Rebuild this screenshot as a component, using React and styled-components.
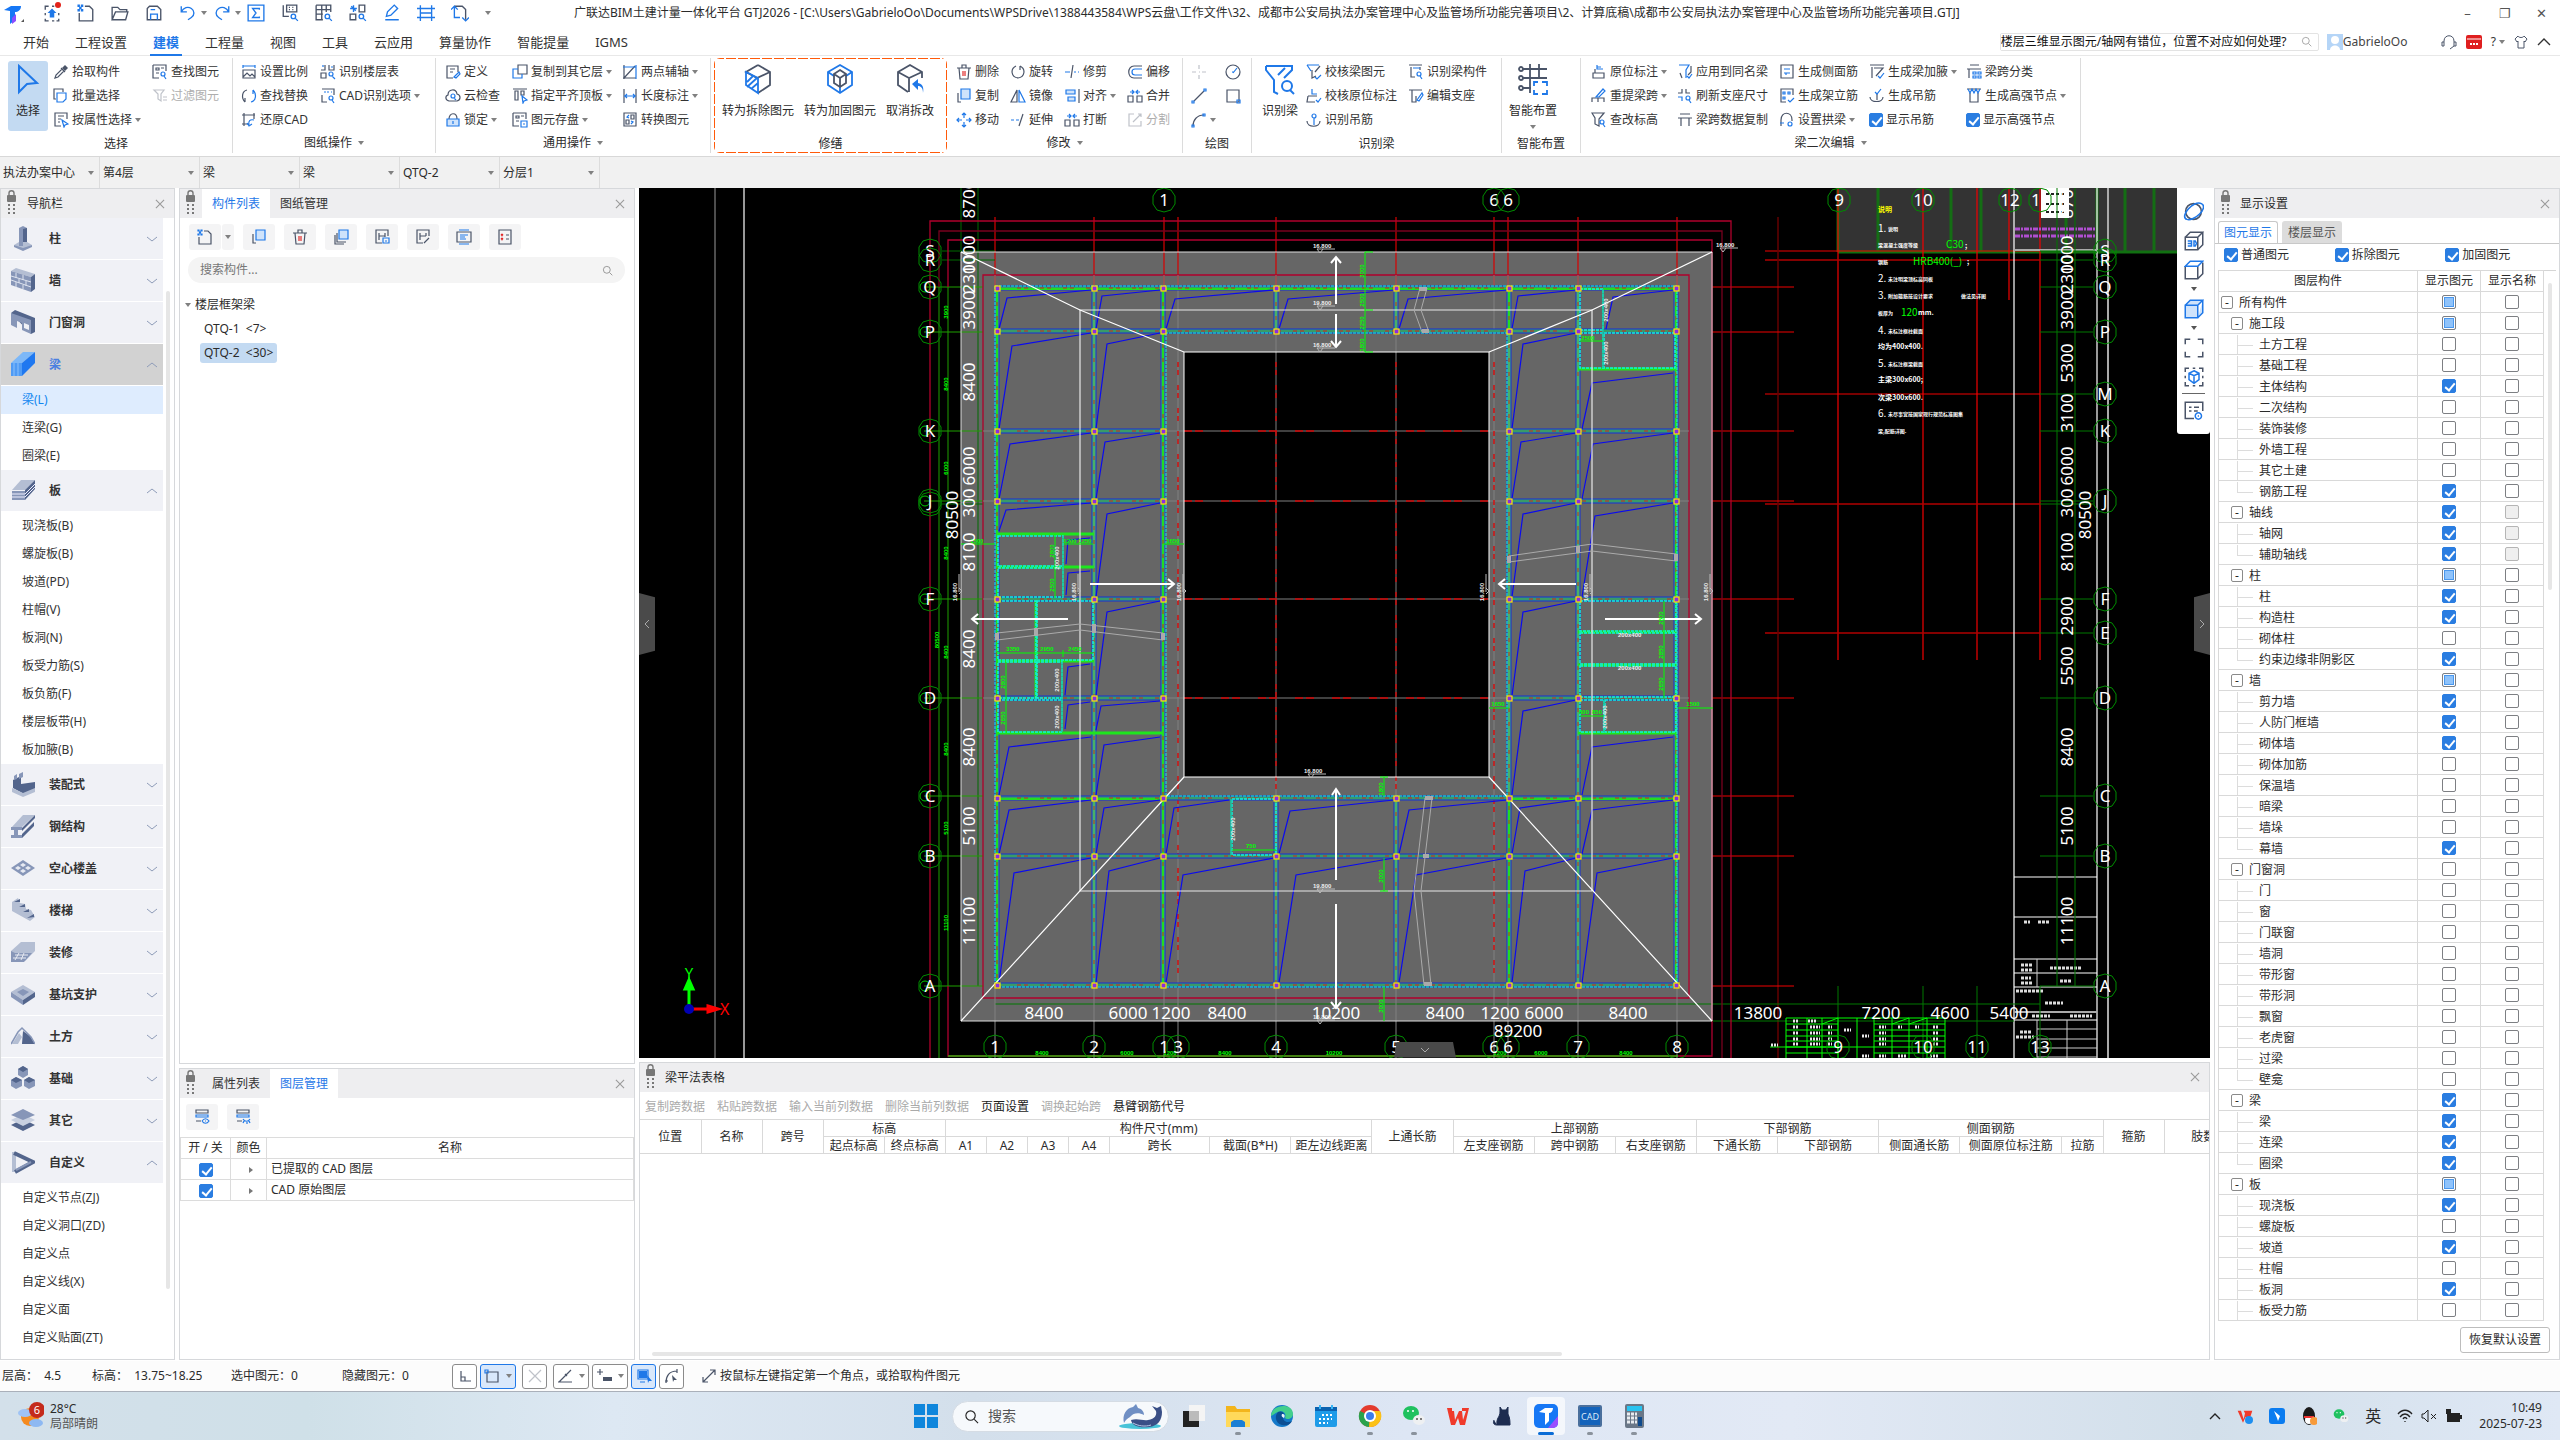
import { useState } from "react";
import styled, { createGlobalStyle, css } from "styled-components";

const BLUE = "#1f78e8";
const DARK = "#4a5468";
const LINE = "#d6d8db";

const GlobalStyle = createGlobalStyle`
  * { box-sizing: border-box; }
  body {
    margin: 0;
    color: #2b2b2b;
    background: #fff;
    font-family: "Noto Sans", "Noto Sans CJK SC", sans-serif;
    font-size: 12px;
    line-height: 16px;
  }
  button, input, select {
    font: inherit;
    color: inherit;
    margin: 0;
  }
  button {
    border: 0;
    padding: 0;
    background: none;
    white-space: nowrap;
  }
  a { color: inherit; text-decoration: none; }
`;

/* ---------- icons: [dark strokes, blue strokes, blue fill, dark fill, red strokes] ---------- */

const icons = {
  upload: ["M2 5V2h3M8 2h2M2 8v2M2 13v2h3M8 15h2M14 8v2M14 13v2h-2", "", "M8 4l4 4h-2v4H6V8H4z"],
  newFile: ["M7 2h4l3 3v10H2V8", "M1 1h1v1H1zM4 1h1v1H4zM2.500 3h1v1h-1zM1 5h1v1H1zM4 5h1v1H4z"],
  open: ["M1 14V3h5l2 2h6v2M1 14l3-7h11l-2 7z", ""],
  save: ["M2 7V4l2-2h7l3 3v9H2z", "M5 14V9h6v5M5 5h4"],
  undo: ["", "M2 2v5h5M2 7c2-4 6-5 9-3s3 6 0 8l-3 2"],
  redo: ["", "M14 2v5H9M14 7c-2-4-6-5-9-3s-3 6 0 8l3 2"],
  sigma: ["", "M1 1h14v14H1zM11 5V4H5l3 4-3 4h6v-1"],
  calcFind: ["M2 1v10h5M5 1h9v6H5zM7 3h1M10 3h1M7 5h1M10 5h1", "M9 11a2 2 0 104 0 2 2 0 10-4 0M13 13l2 2"],
  gridFind: ["M1 1h13v6M1 1v13h6M1 5h13M1 9h6M6 1v13M10 1v6", "M9 11a2 2 0 104 0 2 2 0 10-4 0M13 13l2 2"],
  partFind: ["M9 1h5v6H9zM1 9h5v5H1z", "M1 4h6M4 1v6M2 2l4 4M9 11a2 2 0 104 0 2 2 0 10-4 0M13 13l2 2"],
  pen: ["", "M3 11l1-4 6-6 3 3-6 6zM2 14h12"],
  ladder: ["", "M3 1v14M13 1v14M0 4h16M0 12h16M3 8h10"],
  pageFind: ["M3 2h7l3 3v9", "M3 2v10h5M0 5l3-3 3 3M10 12l3 3 3-3"],
  dropper: ["M2 14l1-3 6-6 2 2-6 6zM8 4l4 4", "", "", "M9 4l3-3 3 3-3 3z"],
  batch: ["M3 11H1V1h9v3", "M4 5h9v6l-3 3H4z"],
  props: ["M8 14H2V1h12v6M5 4h6M5 7h3M5 10h2", "M9 8l6 4-3 1-1 2z"],
  find: ["M1 1h13v6M1 1v13h6M4 4h3v2H4zM4 9h3M9 4h3", "M9 10a2 2 0 104 0 2 2 0 10-4 0M12 12l2 3"],
  filter: ["M2 2h10L9 6v7l-3-2V6zM11 9h4M11 12h4", ""],
  ratio: ["M2 6h12v8H2zM2 13l4-4 3 3 2-2 3 3", "M2 1v3M14 1v3M2 2h12"],
  floorTable: ["M5 1v5H1M9 1v5h5V1M1 9h5v5H1z", "M3 1v2M11 3h2M9 10a2 2 0 104 0 2 2 0 10-4 0M12 12l3 3"],
  replace: ["M6 2c-5 1-6 8-2 12M4 14v-4", "M10 14c5-1 6-8 2-12M12 2v4"],
  cadOpt: ["M2 1h12v6M2 7v7h5", "M4 4h2M7 4h2M11 4h1M9 10a2 2 0 104 0 2 2 0 10-4 0M12 12l2 3"],
  restore: ["M3 1v13M1 3h13M13 1v6M1 12h7", "M13 8c-4-1-6 1-5 5M6 11l2 3 3-2"],
  define: ["M13 8V2H2v12h6M5 5h5M5 8h3", "M9 13l5-5 1 2-4 4z"],
  cloud: ["M4 13c-4-1-4-5-1-6 0-6 8-7 9-1 4 1 4 6 0 7z", "M6 8a2 2 0 104 0 2 2 0 10-4 0M9 10l2 2"],
  lock: ["M4 7c0-7 8-7 8 0", "M2 7h12v7H2zM8 9v3"],
  copyFloor: ["M6 1h9v9H6z", "M6 5H1v9h9v-4"],
  align: ["M1 1h14M3 3h3v9H3zM9 3h3v4H9z", "M10 8l5 4-3 1-1 2z"],
  store: ["M1 1h13v6M1 1v13h6M4 4h3v2H4zM4 9h3M9 4h3", "M9 9h6v6H9zM11 12h2"],
  axis: ["M2 14L13 2M2 1v14M1 14h13", "M1 3h13M14 1v14"],
  dim: ["M2 1v14M14 1v14", "M2 8h12M5 6L3 8l2 2M11 6l2 2-2 2"],
  swap: ["M2 1h12v13H2zM4 8h3v4H4zM9 3h3v4H9z", "M7 3L5 5l2 1M9 12l2-2-2-1"],
  trash: ["M1 4h14M3 4l1 11h8l1-11M6 4V1h4v3", "", "", "", "M7 7v5M9 7v5"],
  rotate: ["M6 2c-6 3-5 11 2 12 7-1 8-9 2-12M10 2v4", ""],
  trim: ["M9 1L7 14", "M1 8h5M10 8h2M14 8h1"],
  offset: ["M15 2H7C0 2 0 14 7 14h8", "M15 5H8c-4 0-4 6 0 6h7"],
  copy: ["M5 14H2V5", "M5 1h9v10H5z"],
  mirror: ["M7 2v12H1z", "M9 2v12h6z"],
  alignTo: ["M15 1v14", "M2 2h9v4H2zM4 9h7v4H4z"],
  merge: ["M1 8h5v6H1zM10 8h5v6h-5z", "M3 4h4M13 4H9M5 2l2 2-2 2M11 2L9 4l2 2"],
  move: ["", "M8 1v5M8 10v5M1 8h5M10 8h5M6 3l2-2 2 2M6 13l2 2 2-2M3 6L1 8l2 2M13 6l2 2-2 2"],
  extend: ["M13 2L9 14", "M1 8h3M6 8h3"],
  split: ["M7 2H2v12h12V9M6 10l8-8M11 2h3v3", ""],
  point: ["M8 1v4M8 11v4M1 8h4M11 8h4M8 8h1", ""],
  circle: ["M1 8a7 7 0 1014 0A7 7 0 101 8", "M8 9l4-5M7 8h2"],
  line: ["M3 13L13 3", "M1 13h2v2H1zM13 1h2v2h-2z"],
  rect: ["M2 2h12v12H2z", "M12 12h3v3h-3z"],
  arc: ["M2 14C2 8 6 3 13 3", "M1 13h2v2H1zM12 2h2v2h-2z"],
  checkBeam: ["M9 8l5-6M6 6v8l4-2", "M1 1h12M1 1l4 6M9 13l2 2 4-4"],
  checkPos: ["M2 8h9M2 8l-1 6h8", "M6 1v5h5M10 12l2 2 3-4"],
  hook: ["M1 9c0 7 13 7 13 0", "M8 2a2 2 0 100 4 2 2 0 100-4M8 6v7"],
  beamPart: ["M1 1h13M3 3v10h4M12 3v3", "M5 4h7M9 10a2 2 0 104 0 2 2 0 10-4 0M12 12l2 3"],
  support: ["M1 2h13M4 2v12h4V8", "M9 12l5-7 1 2-4 6z"],
  posMark: ["M2 9h11v5H2zM4 9V5", "M6 1v4h6M6 3h4"],
  respan: ["M1 14v-4h12v4M7 10v4", "M5 9l7-8 2 2-6 6z"],
  elev: ["M1 1h12L8 7v7L4 12V6z", "M9 10a2 2 0 104 0 2 2 0 10-4 0M12 12l2 3"],
  same: ["M14 2v6l-3 3M5 14l-2-5", "M2 1h10L9 6v8M10 12l2 2 3-4"],
  refresh: ["M1 5h4V1M9 1v4h4", "M9 10a2 2 0 104 0 2 2 0 10-4 0M12 12l2 3M1 9h4v4"],
  spanCopy: ["M3 2h10M1 6h14M4 6v8M12 6v8", ""],
  side: ["M2 1h12v13H2z", "M5 5h6M5 9h6M7 9v2"],
  stirrup: ["M14 7V1H2v13h5", "M4 4h2v2H4zM9 4h2v2H9zM4 9h2v2H4zM9 12l2 2 4-4"],
  arch: ["M2 14V8C2-1 13-1 13 8v1", "M9 12a2 2 0 104 0 2 2 0 10-4 0M1 11h4"],
  haunch: ["M1 1h14M3 3v11M5 4h9l-7 8", "M9 12l2 2 4-5"],
  hook2: ["M1 9c0 6 13 6 13 0M8 6v6", "M6 4l2 2 4-5"],
  spans: ["M4 1h9M1 5h14M3 5v9", "M7 8h3v2H7zM12 8h3v2h-3zM7 12h3v2H7zM12 12h3v2h-3z"],
  node: ["M1 1h14M4 5v9h8V5", "M2 1l2 4 2-4 2 4 2-4 2 4 2-4"],
  layers: ["M2 6v9h9M4 4v9h9", "M6 1h9v9H6z"],
  tableSave: ["M14 7V1H2v13h6M5 4v7M5 7h6M11 4v4", "M9 9h6v5H9zM11 12h2"],
  tableEdit: ["M14 7V1H2v13h6M5 4v7M5 7h6M11 4v3M9 14l5-5", ""],
  lines: ["M1 3h14v10H1z", "M3 1h10M3 15h10M4 6h8M4 8h5M4 10h6"],
  redList: ["M2 1h12v14H2zM9 6h3M9 10h3", "", "", "", "M4 5l2 2M6 5L4 7M4 9l2 2M6 9l-2 2"],
  eye: ["M2 1h12v3H2zM2 12h5", "M2 6h12v2H2zM8 12c2-3 5-3 7 0-2 3-5 3-7 0M11 12h1"],
  eyeOff: ["M2 1h12v3H2zM2 12h5", "M2 6h12v2H2zM8 10c2 3 5 3 7 0M9 12l-1 2M12 13v2M14 12l1 2"],
  corner: ["M4 3v10h10M4 9h4v4", ""],
  snapRect: ["M3 4h11v10H3z", "M1 2h3v3H1z"],
  cross: ["M2 2l12 12M14 2L2 14", ""],
  angle: ["M1 14h14M2 14L14 2M8 6l2 2", ""],
  plusBox: ["M4 1v6M1 4h6", "", "", "M7 9h9v4H7z"],
  window: ["", "M2 2h10v9H2zM4 14h5", "M3 3h8v7H3zM11 7l5 6-3 0-1 2z"],
  curve: ["M2 15C2 8 5 3 13 3M13 1v4M1 13h3", "", "", "M8 7l5 5-3 0-1 2z"],
  orbit: ["M2 8a6 6 0 1012 0A6 6 0 102 8", "M3 14C-3 12 8-1 14 2S8 16 3 14"],
  cube3d: ["M1 5h10v10H1zM1 5l4-4h10l-4 4M15 1v10l-4 4", "M3 8h3v4H3M3 10h3M8 8h1l1 2-1 2H8z"],
  cube: ["M1 5v10h10V5M15 2v9l-4 4", "M1 5h10l4-4H5z"],
  cubeFill: ["", "M1 5h10v10H1zM1 5l4-4h10l-4 4M15 1v10l-4 4"],
  frame: ["M1 5V1h4M11 1h4v4M15 11v4h-4M5 15H1v-4", ""],
  cubeBox: ["M1 4V1h3M7 1h2M12 1h3v3M15 7v2M15 12v3h-3M9 15H7M4 15H1v-3M1 9V7", "M8 3l4 2v5l-4 3-4-3V5zM4 5l4 2 4-2M8 7v6"],
  listEye: ["M15 8V1H1v13h7M4 5h2M8 5h4M4 8h2M8 8h3", "M9 12a2.500 2.500 0 105 0 2.500 2.500 0 10-5 0M11 12h1"],
  search: ["M2 7a5 5 0 1010 0A5 5 0 102 7M11 11l4 4", ""],
  diag: ["M2 14L14 2M9 2h5v5M2 9v5h5", ""],
};

const tinted = ["copy", "layers", "lock", "alignTo", "cubeFill"];

const Svg = styled.svg`
  flex: none;
  display: block;
  opacity: ${(p) => (p.$off ? 0.35 : 1)};
`;

const Icon = ({ name, size = 16, off, color = DARK }) => {
  const [d, b, bf, df, r] = icons[name];
  return (
    <Svg width={size} height={size} viewBox="0 0 16 16" fill="none" strokeWidth="1.200" $off={off} aria-hidden="true">
      {bf && <path d={bf} fill={BLUE} />}
      {df && <path d={df} fill={color} />}
      {d && <path d={d} stroke={color} />}
      {b && <path d={b} stroke={BLUE} fill={tinted.includes(name) ? "#cfe3fb" : "none"} />}
      {r && <path d={r} stroke="#e02b2b" />}
    </Svg>
  );
};

const Caret = styled.i`
  flex: none;
  border: 3px solid transparent;
  border-top: 4px solid #808080;
  border-bottom: 0;
`;

const Check = styled.input.attrs({ type: "checkbox" })`
  appearance: none;
  flex: none;
  display: inline-block;
  position: relative;
  width: 14px;
  height: 14px;
  border: 1px solid #7d7f83;
  border-radius: 2px;
  background: ${(p) => (p.disabled ? "#efefef" : "#fff")};
  vertical-align: middle;
  ${(p) => p.disabled && "border-color: #b5b5b5;"}
  ${(p) => p.$partial && css`
    background: #8fc3fb;
    box-shadow: inset 0 0 0 1px #fff, inset 0 0 0 2px #4a98ee;
  `}
  &:checked {
    background: #2a7de1;
    border-color: #2a7de1;
  }
  &:checked::after {
    content: "";
    position: absolute;
    left: 4px;
    top: 1px;
    width: 4px;
    height: 8px;
    border: solid #fff;
    border-width: 0 2px 2px 0;
    transform: rotate(40deg);
  }
`;

/* ---------- title bar ---------- */

const Page = styled.div`
  display: flex;
  flex-direction: column;
  min-height: 100vh;
`;

const TitleBar = styled.header`
  display: flex;
  align-items: center;
  height: 28px;
  padding: 0 10px 2px 3px;
`;

const QuickBar = styled.div`
  display: flex;
  flex: 0 0 571px;
  align-items: center;
`;

const QuickButton = styled.button`
  display: flex;
  align-items: center;
  position: relative;
  gap: 4px;
  width: ${(p) => p.$w || 34}px;
  height: 22px;
`;

const RedDot = styled.i`
  position: absolute;
  left: 12px;
  top: 0;
  width: 6px;
  height: 6px;
  border-radius: 50%;
  background: #e2231a;
`;

const TitleText = styled.div`
  flex: 1;
  white-space: nowrap;
`;

const WinButtons = styled.div`
  display: flex;
  gap: 20px;
  button { width: 17px; color: #555; font-size: 13px; }
`;

const TabRow = styled.nav`
  display: flex;
  align-items: center;
  height: 28px;
  padding: 0 9px 0 10px;
  border-bottom: 1px solid #e8e8e8;
`;

const RibbonTab = styled.a`
  position: relative;
  padding: 0 13px;
  font-size: 13px;
  line-height: 28px;
  color: ${(p) => (p.$on ? BLUE : "#333")};
  font-weight: ${(p) => (p.$on ? 700 : 400)};
  &::after {
    content: "";
    display: ${(p) => (p.$on ? "block" : "none")};
    position: absolute;
    left: 10px;
    right: 10px;
    bottom: 0;
    height: 2px;
    background: ${BLUE};
  }
`;

const HelpSearch = styled.label`
  display: flex;
  align-items: center;
  width: 319px;
  height: 18px;
  margin-left: auto;
  padding-right: 6px;
  border: 1px solid #e3e3e3;
  border-radius: 2px;
  input {
    flex: 1;
    min-width: 0;
    height: 16px;
    padding: 0 12px 0 0;
    border: 0;
    outline: 0;
    color: #111;
  }
`;

const Account = styled.div`
  display: flex;
  align-items: center;
  width: 114px;
  margin-left: 8px;
  color: #444;
`;

const HelpIcons = styled.div`
  display: flex;
  align-items: center;
  gap: 9px;
`;

/* ---------- ribbon ---------- */

const Ribbon = styled.section`
  display: flex;
  height: 101px;
  padding: 2px 0 3px;
  border-bottom: 1px solid #d8d8d8;
`;

const Group = styled.div`
  display: flex;
  flex-direction: column;
  width: ${(p) => p.$w}px;
  padding-top: 2px;
  border-right: 1px solid #dcdcdc;
  ${(p) => p.$marked && css`
    margin-left: 3px;
    border: 0;
    border-radius: 6px;
    background:
      repeating-linear-gradient(90deg, #ff5a0a 0 10px, transparent 10px 12px) 0 0 / 100% 1px no-repeat,
      repeating-linear-gradient(90deg, #ff5a0a 0 10px, transparent 10px 12px) 0 100% / 100% 1px no-repeat,
      repeating-linear-gradient(#ff5a0a 0 10px, transparent 10px 12px) 0 0 / 1px 100% no-repeat,
      repeating-linear-gradient(#ff5a0a 0 10px, transparent 10px 12px) 100% 0 / 1px 100% no-repeat;
  `}
`;

const GroupBody = styled.div`
  display: flex;
  height: 72px;
  padding-left: ${(p) => p.$pad || 8}px;
`;

const GroupLabel = styled.div`
  display: flex;
  align-items: center;
  justify-content: center;
  gap: 6px;
  padding-top: ${(p) => (p.$drop ? 3 : 4)}px;
`;

const Column = styled.div`
  display: flex;
  flex-direction: column;
  width: ${(p) => p.$w}px;
`;

const Tool = styled.button`
  display: flex;
  align-items: center;
  height: 24px;
  gap: 3px;
  color: ${(p) => (p.disabled ? "#aeaeae" : "#333")};
`;

const ToolCheck = styled.label`
  display: flex;
  align-items: center;
  height: 24px;
  gap: 3px;
`;

const BigTool = styled.button`
  display: flex;
  flex-direction: column;
  align-items: center;
  width: ${(p) => p.$w}px;
  height: 70px;
  margin: 1px 5px 0 0;
  padding-top: 2px;
  gap: 6px;
  border-radius: 3px;
  background: ${(p) => (p.$on ? "#c3daf2" : "none")};
`;

const ribbonTabs = ["开始", "工程设置", "建模", "工程量", "视图", "工具", "云应用", "算量协作", "智能提量", "IGMS"];

const bigIcons = {
  cursor: <path d="M7 3l18 17-10 1-8 8z" fill="none" stroke={BLUE} strokeWidth="2" />,
  remove: (
    <g fill="none" strokeWidth="1.800">
      <path d="M16 2l12 7v13l-12 8M16 2L4 9l11 6 13-6" stroke={DARK} />
      <path d="M4 9v13l12 8V15zM5 19l6-6M5 24L15 15M9 26l7-6" stroke={BLUE} />
    </g>
  ),
  strengthen: (
    <g fill="none" strokeWidth="1.800">
      <path d="M16 2l12 7v13l-12 8-12-8V9z" stroke={BLUE} />
      <path d="M4 9l6 4M28 9l-6 4M16 30v-6" stroke={BLUE} />
      <path d="M16 7l6 4v9l-6 4-6-4v-9zM10 11l6 4 6-4M16 15v9" stroke={DARK} />
    </g>
  ),
  cancel: (
    <g fill="none" strokeWidth="1.800">
      <path d="M28 15V9L16 2 4 9v13l10 7M4 9l11 6 13-6M15 15v14" stroke={DARK} />
      <path d="M29 30c0-5-2-7-5-7v4l-6-6 6-5v4c5 1 6 5 5 10z" fill={BLUE} />
    </g>
  ),
  beam: (
    <g fill="none" stroke={BLUE} strokeWidth="2">
      <path d="M2 3h26v4l-8 8M2 3v4l8 10v12l4 2M14 12l7-7" />
      <circle cx="23" cy="23" r="5" /><path d="M26 27l4 4" />
    </g>
  ),
  layout: (
    <g fill="none" strokeWidth="1.800">
      <path d="M6 6h24M6 15h24M6 25h8M13 1v29M22 1v15" stroke={DARK} />
      <circle cx="4" cy="6" r="2" stroke={DARK} /><circle cx="4" cy="15" r="2" stroke={DARK} /><circle cx="4" cy="25" r="2" stroke={DARK} />
      <path d="M17 23v-4h4M25 19h5v4M30 27v4h-5M21 31h-4v-4" stroke={BLUE} />
    </g>
  ),
};

const Big = ({ icon, text, w, on, drop }) => (
  <BigTool $w={w} $on={on}>
    <Svg width="32" height="34" viewBox="0 0 32 34" aria-hidden="true">{bigIcons[icon]}</Svg>
    {text}
    {drop && <Caret />}
  </BigTool>
);

// item: [icon, text, flags]  flags: v = drop-down, x = disabled, c = tick box
const Tools = ({ w, items }) => (
  <Column $w={w}>
    {items.map(([icon, text, flags = ""], i) =>
      flags.includes("c") ? (
        <ToolCheck key={i}><Check defaultChecked />{text}</ToolCheck>
      ) : (
        <Tool key={i} disabled={flags.includes("x")} aria-label={text || icon}>
          <Icon name={icon} off={flags.includes("x")} />
          {text}
          {flags.includes("v") && <Caret />}
        </Tool>
      )
    )}
  </Column>
);

const ribbonGroups = [
  {
    label: "选择", w: 233, big: [["cursor", "选择", 40, true]],
    cols: [
      [99, [["dropper", "拾取构件"], ["batch", "批量选择"], ["props", "按属性选择", "v"]]],
      [76, [["find", "查找图元"], ["filter", "过滤图元", "x"]]],
    ],
  },
  {
    label: "图纸操作", w: 203, drop: true, pad: 8,
    cols: [
      [79, [["ratio", "设置比例"], ["replace", "查找替换"], ["restore", "还原CAD"]]],
      [110, [["floorTable", "识别楼层表"], ["cadOpt", "CAD识别选项", "v"]]],
    ],
  },
  {
    label: "通用操作", w: 275, drop: true, pad: 9,
    cols: [
      [67, [["define", "定义"], ["cloud", "云检查"], ["lock", "锁定", "v"]]],
      [110, [["copyFloor", "复制到其它层", "v"], ["align", "指定平齐顶板", "v"], ["store", "图元存盘", "v"]]],
      [86, [["axis", "两点辅轴", "v"], ["dim", "长度标注", "v"], ["swap", "转换图元"]]],
    ],
  },
  {
    label: "修缮", w: 233, marked: true, pad: 5,
    big: [["remove", "转为拆除图元", 78], ["strengthen", "转为加固图元", 76], ["cancel", "取消拆改", 54]],
  },
  {
    label: "修改", w: 236, drop: true, pad: 9,
    cols: [
      [54, [["trash", "删除"], ["copy", "复制"], ["move", "移动"]]],
      [54, [["rotate", "旋转"], ["mirror", "镜像"], ["extend", "延伸"]]],
      [63, [["trim", "修剪"], ["alignTo", "对齐", "v"], ["merge", "打断"]]],
      [50, [["offset", "偏移"], ["merge", "合并"], ["split", "分割", "x"]]],
    ],
  },
  {
    label: "绘图", w: 69, pad: 8,
    cols: [
      [34, [["point", "", "x"], ["line", ""], ["arc", "", "v"]]],
      [20, [["circle", ""], ["rect", ""]]],
    ],
  },
  {
    label: "识别梁", w: 250, pad: 7, big: [["beam", "识别梁", 42]],
    cols: [
      [102, [["checkBeam", "校核梁图元"], ["checkPos", "校核原位标注"], ["hook", "识别吊筋"]]],
      [84, [["beamPart", "识别梁构件"], ["support", "编辑支座"]]],
    ],
  },
  { label: "智能布置", w: 79, pad: 5, big: [["layout", "智能布置", 52, false, true]] },
  {
    label: "梁二次编辑", w: 500, drop: true, pad: 10,
    cols: [
      [86, [["posMark", "原位标注", "v"], ["respan", "重提梁跨", "v"], ["elev", "查改标高"]]],
      [102, [["same", "应用到同名梁"], ["refresh", "刷新支座尺寸"], ["spanCopy", "梁跨数据复制"]]],
      [90, [["side", "生成侧面筋"], ["stirrup", "生成架立筋"], ["arch", "设置拱梁", "v"]]],
      [97, [["haunch", "生成梁加腋", "v"], ["hook2", "生成吊筋"], ["", "显示吊筋", "c"]]],
      [110, [["spans", "梁跨分类"], ["node", "生成高强节点", "v"], ["", "显示高强节点", "c"]]],
    ],
  },
];

const SelectBar = styled.section`
  display: flex;
  height: 31px;
  background: #f1f1f1;
`;

const SelectBox = styled.label`
  display: flex;
  align-items: center;
  width: 100px;
  padding-right: 5px;
  border-right: 1px solid #dcdcdc;
  select {
    appearance: none;
    flex: 1;
    min-width: 0;
    height: 30px;
    padding: 0 0 0 3px;
    border: 0;
    background: none;
  }
`;

/* ---------- dock panels ---------- */

const Main = styled.main`
  display: grid;
  flex: 1;
  grid-template-columns: 175px 456px minmax(0, 1fr) 346px;
  column-gap: 4px;
  min-height: 0;
  padding-bottom: 1px;
`;

const Stack = styled.div`
  display: flex;
  flex-direction: column;
  gap: 4px;
  min-width: 0;
`;

const Panel = styled.section`
  display: flex;
  flex-direction: column;
  flex: ${(p) => p.$flex || "1"};
  min-width: 0;
  overflow: hidden;
  border: 1px solid ${LINE};
  background: #fff;
`;

const PanelHead = styled.header`
  display: flex;
  flex: none;
  align-items: stretch;
  height: 29px;
  padding: 0 9px 0 6px;
  background: #eeeef0;
`;

const PanelTitle = styled.h2`
  margin: 0;
  padding-left: ${(p) => p.$pad || 10}px;
  font-size: 12px;
  font-weight: 400;
  line-height: 30px;
`;

const DockTab = styled.button`
  padding: 1px 10px 0;
  color: ${(p) => (p.$on ? BLUE : "#333")};
  background: ${(p) => (p.$on ? "#fff" : "none")};
`;

const CloseButton = styled.button`
  margin-left: auto;
  svg { display: block; }
`;

const Close = () => (
  <CloseButton aria-label="关闭">
    <svg width="10" height="10" viewBox="0 0 11 11" stroke="#9a9a9a" strokeWidth="1.200"><path d="M1 1l9 9M10 1l-9 9" /></svg>
  </CloseButton>
);

const GripSvg = styled(Svg)`
  margin-right: 7px;
`;

const Grip = () => (
  <GripSvg width="9" height="26" viewBox="0 0 9 26" aria-hidden="true">
    <rect y="6" width="9" height="7" rx="1" fill="#777" />
    <path d="M2 6V4c0-3 5-3 5 0v2" fill="none" stroke="#777" strokeWidth="1.400" />
    <path d="M2 15v10M7 15v10" stroke="#777" strokeWidth="2" strokeDasharray="2 2" />
  </GripSvg>
);

const NavBody = styled.div`
  display: flex;
  justify-content: space-between;
  padding-right: 4px;
`;

const NavList = styled.div`
  width: 162px;
`;

const ScrollThumb = styled.i`
  width: 4px;
  height: ${(p) => p.$h}px;
  margin-top: ${(p) => p.$top}px;
  border-radius: 2px;
  background: #e6e6e6;
`;

const NavGroup = styled.button`
  display: flex;
  align-items: center;
  width: 100%;
  height: 41px;
  margin-bottom: 1px;
  padding: 0 6px 0 10px;
  gap: 14px;
  font-weight: 700;
  text-align: left;
  color: ${(p) => (p.$on ? "#4a7fe0" : "#333")};
  background: ${(p) => (p.$on ? "#d2d2d2" : "#f0f1f6")};
  span { flex: 1; }
`;

const NavItem = styled.a`
  display: block;
  padding-left: 21px;
  line-height: 28px;
  color: ${(p) => (p.$on ? "#1287f0" : "#333")};
  background: ${(p) => (p.$on ? "#deecfe" : "none")};
`;

const L = "#b4bed3", M = "#8796b8", H = "#53658c";
const navArt = {
  柱: <g><path d="M8 2l4-2 4 2v17H8z" fill={M} /><path d="M12 3l4-1v17l-4 2z" fill={H} /><path d="M3 19l5-3h8l5 3-9 5z" fill={L} /><path d="M3 19l9 3 9-3v2l-9 4-9-4z" fill={M} /><path d="M8 3h4v17H8z" fill={M} /></g>,
  墙: <g><path d="M0 3l5-3 19 6-4 3z" fill={L} /><path d="M0 3l20 6v15L0 17z" fill={M} /><path d="M20 9l4-3v15l-4 3z" fill={H} /><path d="M0 8l20 6M0 12l20 7M5 5v5M12 7v5M8 11v4M15 13v5M5 14v5M12 17v4" stroke="#dfe4ef" /></g>,
  门窗洞: <g><path d="M0 3l4-3 20 8v14l-4 2z" fill={H} /><path d="M0 3l20 7v14l-9-4v-7l-5-2v7l-6-3z" fill={M} /><path d="M13 13l5 2v5l-5-2z" fill="#f0f1f6" /></g>,
  梁: <g><path d="M0 11L12 0h12L11 11z" fill="#7db8f8" /><path d="M0 11h11v13H0z" fill="#4f9bf5" /><path d="M11 11L24 0v11L11 24z" fill="#1f78f0" /><path d="M3 11v13M7 11v13" stroke="#8cc0fa" /></g>,
  板: <g><path d="M1 12L10 2h14L14 12z" fill={L} /><path d="M1 13h13v9H1z" fill={M} /><path d="M14 12L24 2v9L14 22z" fill={H} /><path d="M1 16h13L24 6M1 19h13L24 9" stroke="#eef" fill="none" /></g>,
  装配式: <g><path d="M2 8l8-4v8l14-2v7l-11 5-11-6z" fill={H} /><path d="M1 16l11 5 12-5v4l-12 5-11-5z" fill={L} /><path d="M3 4l3-2v5L3 8zM8 2l4-2v5L8 7z" fill={M} /></g>,
  钢结构: <g><path d="M0 14L12 1h12L11 13z" fill={L} /><path d="M0 13h11v3H7v5h4v3H0v-3h3v-5H0z" fill={M} /><path d="M11 14L24 1v3L11 17zM11 20l12-12v4L11 24z" fill={H} /></g>,
  空心楼盖: <g><path d="M12 4l12 8-12 8L0 12z" fill={M} /><path d="M12 7l3 2-3 2-3-2zM7 10l3 2-3 2-3-2zM17 10l3 2-3 2-3-2zM12 13l3 2-3 2-3-2z" fill="#e7eaf2" /></g>,
  楼梯: <g><path d="M1 4l6-4 2 5 5 1 1 5 5 1 4 7-5 4L1 13z" fill={L} /><path d="M3 4l6-3v3zM8 9l6-3v3zM12 14l6-3v3zM16 20l7-4v3z" fill={H} /></g>,
  装修: <g><path d="M0 11L10 2h14v9L14 21H0z" fill={L} /><path d="M0 11l4 2h17l-8 9H0z" fill={M} /><path d="M4 15h13M2 18h13M8 13l-4 7M13 13l-3 7" stroke="#e8ebf3" /></g>,
  基坑支护: <g><path d="M12 3l12 7-12 8L0 10z" fill={L} /><path d="M0 10l12 8v5L0 15z" fill={M} /><path d="M24 10l-12 8v5l12-8z" fill={H} /><path d="M12 7l6 3-6 4-6-4z" fill={M} /></g>,
  土方: <g><path d="M1 20L8 9l3 4-4 7z" fill={L} /><path d="M12 7l7 5 5 8H11z" fill={H} /><path d="M0 20L7 8l4-4 9 9 4 7" fill="none" stroke={M} strokeWidth="1.500" /></g>,
  基础: <g><path d="M7 3l5-3 5 3v6l-5 3-5-3zM0 14l5-3 6 3v6l-6 3-5-3zM13 14l5-3 6 3v6l-6 3-5-3z" fill={M} /><path d="M7 3l5 3 5-3-5-3zM0 14l5 3 6-3-6-3zM13 14l5 3 6-3-6-3z" fill={H} /></g>,
  其它: <g><path d="M12 11l12 6-12 6-12-6z" fill={H} /><path d="M12 6l12 6-12 6-12-6z" fill="#c8d0e0" /><path d="M12 1l12 6-12 5L0 7z" fill={M} /></g>,
  自定义: <g fill="none" strokeWidth="4"><path d="M3 2v20" stroke={L} /><path d="M3 3l19 9L4 22" stroke={H} /><path d="M5 20l15-8" stroke={M} strokeWidth="2" /></g>,
};

const navGroups = [
  ["柱"], ["墙"], ["门窗洞"],
  ["梁", ["梁(L)", "连梁(G)", "圈梁(E)"]],
  ["板", ["现浇板(B)", "螺旋板(B)", "坡道(PD)", "柱帽(V)", "板洞(N)", "板受力筋(S)", "板负筋(F)", "楼层板带(H)", "板加腋(B)"]],
  ["装配式"], ["钢结构"], ["空心楼盖"], ["楼梯"], ["装修"], ["基坑支护"], ["土方"], ["基础"], ["其它"],
  ["自定义", ["自定义节点(ZJ)", "自定义洞口(ZD)", "自定义点", "自定义线(X)", "自定义面", "自定义贴面(ZT)"]],
];

const NavPanel = () => {
  const [current, setCurrent] = useState("梁(L)");
  return (
    <Panel>
      <PanelHead><Grip /><PanelTitle $pad={4}>导航栏</PanelTitle><Close /></PanelHead>
      <NavBody>
        <NavList>
          {navGroups.map(([name, items]) => (
            <div key={name}>
              <NavGroup $on={name === "梁"}>
                <Svg width="24" height="25" viewBox="0 0 24 25" aria-hidden="true">{navArt[name]}</Svg>
                <span>{name}</span>
                <svg width="10" height="6" viewBox="0 0 10 6" fill="none" stroke="#8e9cb8">
                  <path d={items ? "M0 5l5-4 5 4" : "M0 1l5 4 5-4"} />
                </svg>
              </NavGroup>
              {items && items.map((t) => (
                <NavItem key={t} href="#" $on={t === current} onClick={() => setCurrent(t)}>{t}</NavItem>
              ))}
            </div>
          ))}
        </NavList>
        <ScrollThumb $h={998} $top={73} />
      </NavBody>
    </Panel>
  );
};

const ToolRow = styled.div`
  display: flex;
  gap: 9px;
  padding: ${(p) => p.$pad || "6px 9px 7px"};
`;

const IconButton = styled.button`
  display: flex;
  align-items: center;
  justify-content: center;
  width: ${(p) => p.$w || 32}px;
  height: 26px;
  border-radius: 3px;
  background: #f4f4f5;
`;

const Joined = styled.div`
  display: flex;
  gap: 1px;
`;

const SearchField = styled.label`
  display: flex;
  align-items: center;
  height: 26px;
  margin: 0 9px 0 8px;
  padding: 0 12px;
  border-radius: 13px;
  background: #f4f4f4;
  input {
    flex: 1;
    padding: 0;
    border: 0;
    outline: 0;
    background: none;
  }
  input::placeholder { color: #777; }
`;

const Tree = styled.ul`
  margin: 10px 0 0;
  padding: 0 0 0 5px;
  list-style: none;
`;

const TreeRow = styled.li`
  display: flex;
  align-items: center;
  height: 24px;
  padding-left: ${(p) => (p.$child ? 15 : 0)}px;
  gap: 4px;
`;

const TreeName = styled.span`
  padding: 2px 4px;
  border-radius: 3px;
  background: ${(p) => (p.$on ? "#c3daf2" : "none")};
`;

const LayerTable = styled.table`
  width: 100%;
  border-collapse: collapse;
  th, td {
    height: 21px;
    padding: 0;
    border: 1px solid #dcdcdc;
    font-weight: 400;
    text-align: center;
  }
  td:last-child { padding-left: 4px; text-align: left; }
  th:nth-child(1) { width: 50px; }
  th:nth-child(2) { width: 36px; }
`;

const Side = styled.i`
  display: inline-block;
  margin-left: 4px;
  border: 3px solid transparent;
  border-left: 4px solid #777;
  border-right: 0;
`;

/* ---------- drawing canvas ---------- */

const CanvasBox = styled.section`
  display: flex;
  flex: 871 1 0;
  position: relative;
  min-height: 0;
  overflow: hidden;
  background: #000;
  > svg { position: absolute; inset: 0; width: 100%; height: 100%; }
`;

const ViewTools = styled.div`
  position: absolute;
  right: 0;
  top: 0;
  display: flex;
  flex-direction: column;
  align-items: center;
  width: 33px;
  height: 246px;
  padding-top: 9px;
  border-radius: 0 0 3px 3px;
  background: #fff;
  button { height: 29px; }
  ${Caret} { margin: 3px 0; border-top-color: #555; }
  hr { width: 23px; height: 1px; margin: 2px 0; border: 0; background: #666; }
`;

const Handle = styled.button`
  position: absolute;
  color: #aaa;
  background: #4a4a4a;
  ${(p) => p.$side === "left" && "left: 0; top: 405px; width: 16px; height: 62px; clip-path: polygon(0 0, 100% 7%, 100% 93%, 0 100%);"}
  ${(p) => p.$side === "right" && "right: 0; top: 405px; width: 16px; height: 62px; clip-path: polygon(100% 0, 0 7%, 0 93%, 100% 100%);"}
  ${(p) => p.$side === "bottom" && "left: 755px; bottom: 0; width: 62px; height: 16px; clip-path: polygon(5% 0, 95% 0, 100% 100%, 0 100%);"}
  svg { display: block; margin: 0 auto; }
`;

const CX = [997, 1094, 1163, 1276, 1396, 1509, 1578, 1676];
const AX = [995, 1094, 1164, 1178, 1276, 1396, 1494, 1508, 1578, 1677];
const rowsLeft = { S: 251, R: 260, Q: 287, P: 332, K: 431, J: 501, F: 599, D: 698, C: 796, B: 856, A: 986 };
const rowsRight = { S: 251, R: 260, Q: 287, P: 332, M: 394, K: 431, J: 501, F: 599, E: 633, D: 698, C: 796, B: 856, A: 986 };

const slabs = [
  ...[[288, 331], [331, 431], [431, 501], [501, 533]].map(([a, b]) => [997, a, 1093, b]),
  [1064, 536, 1092, 566], [1064, 569, 1092, 597], [1063, 662, 1092, 697], [1063, 700, 1092, 731],
  ...[[735, 797], [798, 856], [856, 985]].map(([a, b]) => [997, a, 1093, b]),
  ...[[288, 331], [331, 431], [431, 501], [501, 599], [599, 698], [699, 732], [735, 797], [798, 856], [856, 985]].map(([a, b]) => [1094, a, 1162, b]),
  [1164, 288, 1276, 331], [1277, 288, 1396, 331], [1397, 288, 1509, 331],
  [1164, 798, 1231, 856], [1277, 798, 1396, 856], [1397, 798, 1509, 856],
  [1164, 856, 1276, 985], [1277, 856, 1396, 985], [1397, 856, 1509, 985],
  ...[[288, 331], [331, 431], [431, 501], [501, 599], [599, 698], [698, 797], [798, 856], [856, 985]].map(([a, b]) => [1510, a, 1578, b]),
  [1604, 288, 1675, 331],
  ...[[371, 431], [431, 501], [501, 599], [735, 797], [798, 856], [856, 985]].map(([a, b]) => [1580, a, 1675, b]),
];

const beamsH = [
  [288, 997, 1676], [331, 997, 1676], [798, 997, 1676], [856, 997, 1676], [985, 997, 1676],
  ...[431, 501, 599, 698].flatMap((y) => [[y, 997, 1163], [y, 1509, 1676]]),
];
const beamsV = [
  ...[997, 1094, 1163, 1509, 1578, 1676].map((x) => [x, 288, 985]),
  ...[1276, 1396].flatMap((x) => [[x, 288, 331], [x, 798, 985]]),
];
const cyanBoxes = [
  [998, 536, 65, 30], [998, 568, 65, 29], [998, 601, 38, 59], [1037, 601, 56, 59], [998, 662, 38, 36], [1037, 662, 25, 36], [998, 700, 64, 32],
  [1580, 289, 23, 41], [1580, 333, 23, 35], [1604, 333, 71, 35], [1580, 601, 96, 30], [1580, 633, 96, 31], [1580, 666, 96, 31],
  [1580, 700, 24, 32], [1605, 700, 71, 32], [1232, 799, 44, 56],
];
const greenBars = [
  [997, 534, 1094, 534], [997, 567, 1094, 567], [1036, 600, 1036, 698], [997, 661, 1094, 661], [997, 733, 1163, 733],
  [1578, 369, 1676, 369], [1578, 632, 1676, 632], [1578, 665, 1676, 665], [1578, 733, 1676, 733],
];

const bubble = (cx, cy, r = 12) =>
  Array.from({ length: 10 }, (_, i) => {
    const a = (i * Math.PI) / 5 + Math.PI / 2;
    return `${Math.round(cx + r * Math.cos(a))},${Math.round(cy + r * Math.sin(a))}`;
  }).join(" ");

const Lines = ({ list, ...rest }) => (
  <path d={list.map(([a, b, c, d]) => `M${a} ${b}L${c} ${d}`).join("")} fill="none" {...rest} />
);

const Bubble = ({ x, y, t }) => (
  <g>
    <polygon points={bubble(x, y)} fill="none" stroke="#008c00" />
    <text x={x} y={y + 6} textAnchor="middle">{t}</text>
  </g>
);

const Turned = ({ x, y, children, ...rest }) => (
  <text transform={`translate(${x} ${y}) rotate(-90)`} textAnchor="middle" {...rest}>{children}</text>
);

const notes = [
  [228, "1.", "说明"], [244, "", "梁混凝土强度等级"], [261, "", "钢筋"], [278, "2.", "未注明梁顶标高同板"], [295, "3.", "附加箍筋按设计要求"],
  [312, "", "板厚为"], [330, "4.", "未标注框柱截面"], [346, "", "均为400x400."], [363, "5.", "未标注框梁截面"], [379, "", "主梁300x600;"],
  [397, "", "次梁300x600."], [413, "6.", "未尽事宜按国家现行规范标准图集"], [430, "", "梁,配筋详图."],
];

const PlanDrawing = () => (
  <svg viewBox="639 188 1571 871" preserveAspectRatio="xMinYMin slice" fontFamily='"Noto Sans", "Noto Sans CJK SC", sans-serif' fontSize="17" fill="#fff" role="img" aria-label="第4层平面图">
    <Lines list={[[715, 188, 715, 1059]]} stroke="#999" />
    <Lines list={[[744, 188, 744, 1059]]} stroke="#fff" strokeWidth="1.200" />

    {/* title sheet and notes on the right */}
    <rect x="1838" y="188" width="339" height="64" fill="#333" />
    <Lines list={[1838, 1878, 1951, 1981, 2066, 2097, 2125, 2154].map((x) => [x, 188, x, 252])} stroke="#146e14" strokeWidth="3" />
    <Lines list={[[1838, 252, 2177, 252]]} stroke="#117011" strokeWidth="3" />
    <Lines list={[[1765, 251, 2040, 251], [1765, 394, 2040, 394], [1838, 188, 1838, 660], [1923, 188, 1923, 660], [1977, 188, 1977, 660], [2009, 188, 2009, 300], [2040, 188, 2040, 660]]} stroke="#f00000" strokeWidth="1.200" />
    <Lines list={[[1765, 260, 2040, 260], [1765, 504, 2040, 504], [1765, 633, 2040, 633]]} stroke="#b00000" strokeWidth="1.500" />
    <Lines list={[[1778, 217, 1778, 1059]]} stroke="#640000" strokeWidth="1.500" />
    <Lines list={Object.entries(rowsLeft).filter(([k]) => k !== "S" && k !== "R").map(([, y]) => [1689, y, 1794, y])} stroke="#f00000" strokeWidth="1.200" />
    <g fontSize="7" fontFamily='"Liberation Sans Narrow", "Noto Sans CJK SC", sans-serif' fontWeight="700">
      <text x="1878" y="212" fill="#ff0">说明</text>
      {notes.map(([y, n, t]) => (
        <g key={y}>
          {n && <text x="1878" y={y + 4} fontSize="10" fontWeight="400">{n}</text>}
          <text x={n ? 1888 : 1878} y={y + 3} fontSize={/\d/.test(t) ? 7 : 5}>{t}</text>
        </g>
      ))}
      <text x="1946" y="248" fill="#0f0" fontSize="10" fontWeight="400">C30</text>
      <text x="1965" y="248">;</text>
      <text x="1913" y="265" fill="#0f0" fontSize="10" fontWeight="400">HRB400(_)</text>
      <text x="1967" y="264">;</text>
      <text x="1961" y="298" fontSize="5">做法见详图</text>
      <text x="1901" y="316" fill="#0f0" fontSize="10" fontWeight="400">120</text>
      <text x="1918" y="315">mm.</text>
    </g>
    <rect x="2041" y="188" width="28" height="30" />
    <path d="M2046 194h18M2046 204h18M2046 212h18" stroke="#222" strokeWidth="2" strokeDasharray="3 2" />
    <path d="M2015 229h81M2015 236h81" stroke="#b04fd0" strokeWidth="3" strokeDasharray="5 1 2 1" />
    <Lines list={[[2014, 188, 2014, 1059], [2097, 188, 2097, 1059]]} stroke="#fff" strokeWidth="1.200" />
    <Lines list={[[2108, 188, 2108, 1059], [2014, 250, 2097, 250], [2014, 1012, 2097, 1012]]} stroke="#aaa" strokeWidth="2" />
    <Lines list={[877, 917, 959, 973, 987, 1020].map((y) => [2014, y, 2097, y])} stroke="#fff" />
    <Lines list={[[2037, 959, 2037, 987], [2037, 1020, 2037, 1059], [2067, 1020, 2067, 1059], [2037, 1029, 2097, 1029], [2037, 1039, 2097, 1039], [2037, 1048, 2097, 1048], [2037, 1057, 2097, 1057]]} stroke="#ccc" />
    <path d="M2024 922h6M2038 922h12M2021 965h12M2021 970h12M2021 978h10M2021 983h12M2050 968h32M2060 981h12M2016 991h28M2045 1003h18M2032 1016h18M2070 1016h22M2020 1032h12M2016 1037h18" stroke="#ddd" strokeWidth="3" strokeDasharray="3 1" />
    <Lines list={[[2057, 188, 2057, 986], [2075, 188, 2075, 986], ...Object.values(rowsRight).map((y) => [2040, y, 2093, y]), [2040, 504, 2093, 504]]} stroke="#007800" />

    {/* roof area */}
    <path fillRule="evenodd" d="M961 252H1712V1021H961ZM1184 352V777H1489V352Z" fill="#666" />
    <Lines list={AX.map((x) => [x, 217, x, 287])} stroke="#d80000" strokeWidth="1.200" />
    <Lines list={[[961, 188, 961, 252], [978, 188, 978, 986], [942, 251, 995, 251], [942, 260, 995, 260], [942, 504, 983, 504]]} stroke="#006a00" />
    <Lines list={[[939, 287, 939, 1059], [948, 287, 948, 986], ...Object.values(rowsLeft).slice(2).map((y) => [924, y, 983, y])]} stroke="#1fa000" />
    <Lines list={[[995, 1004, 2040, 1004], [1712, 1021, 2014, 1021], ...[1838, 1923, 1977, 2040].map((x) => [x, 986, x, 1059])]} stroke="#007800" />

    <g fill="none" strokeWidth="1.300">
      <path d="M930 1059V221H1731V1059" stroke="#b0002c" />
      <path d="M939 287V231H1722V1059" stroke="#78001e" />
      <path d="M948 287V240H1712V1056H948V986" stroke="#b00030" />
      <path d="M983 275H1689V998H983Z" stroke="#b0002c" />
    </g>

    <Lines list={[...[431, 501, 599, 698].map((y) => [983, y, 1689, y]), ...AX.map((x) => [x, 275, x, 1059])]} stroke="#808080" />
    <Lines list={[431, 501, 599, 698].map((y) => [1184, y, 1489, y])} stroke="#d00000" strokeWidth="1.300" strokeDasharray="8 3 8 18" />
    <Lines list={AX.map((x) => [x, 362, x, 986])} stroke="#e00000" strokeWidth="1.300" strokeDasharray="5 3 5 10" />

    {/* beams */}
    <Lines list={beamsH.map(([y, a, b]) => [a, y, b, y])} stroke="#1430d8" strokeWidth="5" />
    <Lines list={beamsV.map(([x, a, b]) => [x, a, x, b])} stroke="#1430d8" strokeWidth="5" />
    <Lines list={beamsH.map(([y, a, b]) => [a, y, b, y])} stroke="#3a9a68" strokeWidth="3" />
    <Lines list={beamsV.map(([x, a, b]) => [x, a, x, b])} stroke="#4ab068" strokeWidth="3" />
    <Lines list={[[997, 289, 1676, 289], [1163, 288, 1163, 985], [1509, 288, 1509, 331], [1509, 798, 1509, 985], [997, 799, 1163, 799], [1509, 799, 1676, 799], [997, 288, 997, 985], [1676, 288, 1676, 985]]} stroke="#22dc22" strokeWidth="2" />
    <Lines list={beamsH.map(([y, a, b]) => [a + 20, y, b, y])} stroke="#d02020" strokeDasharray="4 3 4 12" />
    <Lines list={beamsV.map(([x, a, b]) => [x, a, x, b])} stroke="#c03020" strokeDasharray="4 10" />
    <Lines list={greenBars} stroke="#1ee61e" strokeWidth="3" />
    <g fill="none" stroke="#10f0e0" strokeDasharray="3 1">
      {cyanBoxes.map(([x, y, w, h]) => <rect key={`${x}-${y}`} x={x} y={y} width={w} height={h} strokeWidth="1.500" />)}
      <path d="M995 286H1677M1165 333H1507M995 286V987H1677V286M1166 333V796H1507V333" />
    </g>
    <Lines list={[[1063, 536, 1063, 597], [1062, 662, 1062, 732], [1603, 289, 1603, 368], [1604, 700, 1604, 732], [1231, 799, 1231, 855]]} stroke="#18c8a0" strokeWidth="1.500" />
    <g fill="none" stroke="#0a0af0" strokeWidth="1.200">
      {slabs.map(([x1, y1, x2, y2]) => {
        const d = Math.round(0.155 * Math.sqrt((x2 - x1) * (y2 - y1)));
        return <path key={`${x1}-${y1}`} d={`M${x1 + 2} ${y2 - 2}L${x1 + d} ${y1 + d}L${x2 - 2} ${y1 + 2}`} />;
      })}
    </g>

    {/* roof outline and hips */}
    <g fill="none" stroke="#fff">
      <path d="M961 252H1712V1021H961Z" stroke="#ddd" />
      <path d="M1184 352H1489V777H1184Z" />
      <path d="M1080 310H1592V891H1080Z" stroke="#e8e8e8" strokeWidth="1.200" />
      <path d="M961 252L1080 310L1184 352M1712 252L1592 310L1489 352M961 1021L1184 777M1712 1021L1489 777" strokeWidth="1.200" />
    </g>

    {[288, 331, 431, 501, 599, 698, 798, 856, 985].flatMap((y) =>
      CX.filter((x) => !((x === 1276 || x === 1396) && y > 331 && y < 798)).map((x) => (
        <rect key={`${x}-${y}`} x={x - 2} y={y - 2} width="5" height="5" fill="#8a2be2" stroke="#ffe600" strokeWidth="1.200" />
      ))
    )}

    {/* ramps */}
    <g fill="none" stroke="#aaa">
      <path d="M997 633L1080 624L1163 633V640L1080 630L997 640Z" />
      <path d="M1509 556L1592 544L1676 554V561L1592 551L1509 562Z" />
      <path d="M1420 288L1414 310L1422 332H1429L1421 310L1427 288Z" />
      <path d="M1425 798L1414 891L1424 985H1431L1421 891L1432 798Z" />
      <path d="M1419 289h8M1422 331h7M1425 798h8M1423 856h6M1424 984h8M1094 624v9M1163 633v7M997 633v7M1036 628v8M1509 556v7M1578 546v7M1676 554v7" strokeWidth="4" />
    </g>

    {/* slope arrows */}
    <g fill="none" stroke="#fff" strokeWidth="2">
      <path d="M1336 304V258M1331 263L1336 257L1341 263M1336 314V346M1331 341L1336 347L1341 341" />
      <path d="M1336 880V790M1332 795L1336 789L1340 795M1336 904V1007M1331 1002L1336 1008L1341 1002" />
      <path d="M1090 584H1173M1168 579L1174 584L1168 589M1068 619H973M978 614L972 619L978 624" />
      <path d="M1576 584H1500M1505 579L1499 584L1505 589M1605 619H1700M1695 614L1701 619L1695 624" />
    </g>

    {/* local dimensions */}
    <g fill="none" stroke="#0f0">
      <path d="M1365 252V352M1365 252h8M1365 310h8M1365 352h8M1384 777V796M1384 858V891M1384 987V1021M1380 777h8M1380 891h8" />
      <path d="M961 544H995M1163 544H1184M1064 544H1093M1055 534V598M997 653H1093M1063 650v7M1006 662V733M1232 850H1276M1580 341H1603M1664 601V698M1489 708H1509M1678 708H1713M1580 716H1604" />
      <path d="M948 1056H1678" />
    </g>
    <g fill="#0f0" fontSize="6" fontWeight="700" fontFamily='"Liberation Sans Narrow", "Liberation Sans", sans-serif' textAnchor="middle">
      {[[312, "3900"], [384, "8400"], [468, "6000"], [553, "8400"], [652, "8400"], [749, "8400"], [828, "5100"], [923, "11100"]].map(([y, t]) => <Turned key={y} x={948} y={y}>{t}</Turned>)}
      <Turned x={939} y={640}>80500</Turned>
      {[[271, "3000"], [300, "2500"], [323, "2250"], [345, "1800"]].map(([y, t]) => <Turned key={y} x={1364} y={y}>{t}</Turned>)}
      {[[1383, 789, "1800"], [1383, 876, "3000"], [1383, 1006, "3000"], [1054, 551, "2800"], [1054, 585, "2500"], [1005, 682, "2800"], [1005, 718, "2650"], [1663, 618, "2800"], [1663, 652, "2850"], [1663, 684, "2650"]].map(([x, y, t]) => <Turned key={`${x}-${y}`} x={x} y={y}>{t}</Turned>)}
      {[[977, 543, "1500"], [1173, 543, "1650"], [1070, 543, "1200"], [1085, 543, "1250"], [1013, 651, "3350"], [1047, 651, "2950"], [1075, 651, "2450"], [1251, 848, "750"], [1588, 340, "2500"], [1498, 706, "1650"], [1693, 706, "1500"], [1584, 714, "800"], [1597, 714, "850"],
        [1042, 1055, "8400"], [1127, 1055, "6000"], [1170, 1055, "1200"], [1225, 1055, "8400"], [1334, 1055, "10200"], [1500, 1055, "1200"], [1541, 1055, "6000"], [1626, 1055, "8400"]].map(([x, y, t]) => <text key={`${x}-${y}`} x={x} y={y}>{t}</text>)}
    </g>
    <g fill="#eee" fontSize="6" fontWeight="700" fontFamily='"Liberation Sans Narrow", "Liberation Sans", sans-serif'>
      {[[1313, 248, "16.800"], [1313, 305, "19.800"], [1313, 347, "16.800"], [1304, 773, "16.800"], [1313, 888, "19.800"], [1313, 1019, "16.800"], [1716, 247, "16.800"]].map(([x, y, t]) => (
        <g key={`${x}-${y}`}><text x={x} y={y}>{t}</text><path d={`M${x + 4} ${y + 1}h18M${x + 4} ${y + 1}l3 4 3-4`} fill="none" stroke="#bbb" /></g>
      ))}
      {[[957, 592], [1076, 592], [1181, 592], [1484, 592], [1588, 592], [1708, 592]].map(([x, y]) => (
        <g key={x}><Turned x={x} y={y}>16.800</Turned><path d={`M${x + 2} ${y - 18}v18M${x + 2} ${y - 4}l3 3-3 3`} fill="none" stroke="#bbb" /></g>
      ))}
      {[[1059, 558], [1059, 680], [1059, 717], [1235, 829], [1608, 310], [1608, 353], [1607, 717]].map(([x, y]) => <Turned key={`${x}-${y}`} x={x} y={y}>200x400</Turned>)}
      <text x="1618" y="637">200x400</text><text x="1618" y="670">200x400</text>
    </g>

    {/* reinforcement table */}
    <g stroke="#0f0" fill="none">
      <path d="M1786 1018H1945M1786 1024H1838M1786 1030H1838M1786 1036H1838M1786 1041H1838M1786 1047H1838M1786 1053H1838M1874 1024H1945M1874 1030H1945M1874 1036H1945M1874 1041H1945M1874 1053H1945M1770 1047H1945" />
      <path d="M1786 1018V1059M1807 1018V1059M1822 1018V1059M1838 1018V1059M1857 1018V1059M1874 1018V1059M1892 1018V1059M1909 1018V1059M1927 1018V1059M1945 1018V1059" />
      <path d="M1822 1024l16-6M1892 1024l17-6M1909 1024l18-6" />
    </g>
    <path d="M1793 1021h6M1808 1021h8M1793 1027h5M1810 1027h10M1828 1027h4M1793 1033h5M1810 1033h10M1828 1033h4M1793 1039h5M1810 1039h10M1828 1039h4M1793 1044h5M1810 1044h10M1828 1044h4M1844 1030h7M1862 1036h7M1879 1027h7M1879 1033h7M1879 1039h7M1879 1044h7M1898 1027h4M1915 1027h4M1933 1027h5M1933 1033h5M1933 1039h5M1933 1044h5M1771 1045h7M1862 1056h7M1879 1056h7M1898 1056h8M1930 1056h8" stroke="#e8e8e8" strokeWidth="3" strokeDasharray="2 1" />

    {/* axis bubbles */}
    {Object.entries(rowsLeft).map(([t, y]) => (
      <g key={t}>
        {y > 270 && <circle cx="925" cy={y} r="5" fill="none" stroke="#0c0" />}
        <Bubble x={930} y={y} t={t} />
        {t === "J" && <polygon points={bubble(930, 504)} fill="none" stroke="#008c00" />}
      </g>
    ))}
    {Object.entries(rowsRight).map(([t, y]) => <Bubble key={t} x={2105} y={y} t={t} />)}
    {[[1164, "1"], [1494, "6"], [1508, "6"], [1839, "9"], [1923, "10"], [2010, "12"]].map(([x, t]) => <Bubble key={x} x={x} y={200} t={t} />)}
    <text x="2031" y="206">1</text>
    <polygon points={bubble(2040, 200)} fill="none" stroke="#008c00" />
    {[[995, "1"], [1094, "2"], [1164, "1"], [1178, "3"], [1276, "4"], [1396, "5"], [1494, "6"], [1508, "6"], [1578, "7"], [1677, "8"], [1838, "9"], [1923, "10"], [1977, "11"], [2040, "13"]].map(([x, t]) => <Bubble key={x} x={x} y={1047} t={t} />)}
    {[[1044, "8400"], [1128, "6000"], [1171, "1200"], [1227, "8400"], [1336, "10200"], [1445, "8400"], [1500, "1200"], [1544, "6000"], [1628, "8400"], [1758, "13800"], [1881, "7200"], [1950, "4600"], [2009, "5400"]].map(([x, t]) => <text key={x} x={x} y="1019" textAnchor="middle">{t}</text>)}
    <text x="1518" y="1037" textAnchor="middle">89200</text>
    {[[199, "8700"], [255, "1000"], [274, "2300"], [310, "3900"], [382, "8400"], [466, "6000"], [503, "300"], [552, "8100"], [649, "8400"], [747, "8400"], [826, "5100"], [921, "11100"]].map(([y, t]) => <Turned key={y} x={975} y={y}>{t}</Turned>)}
    {[[199, "8700"], [255, "1000"], [274, "2300"], [310, "3900"], [363, "5300"], [413, "3100"], [466, "6000"], [503, "300"], [552, "8100"], [616, "2900"], [666, "5500"], [747, "8400"], [826, "5100"], [921, "11100"]].map(([y, t]) => <Turned key={y} x={2073} y={y}>{t}</Turned>)}
    <Turned x={958} y={515}>80500</Turned>
    <Turned x={2091} y={515}>80500</Turned>

    {/* coordinate tripod */}
    <path d="M689 1009V989M685 989L689 980L693 989Z" stroke="#0f0" strokeWidth="3" fill="#0f0" />
    <path d="M689 1009H709M708 1006L718 1009L708 1012Z" stroke="#f00" strokeWidth="3" fill="#f00" />
    <circle cx="689" cy="1009" r="5" fill="#0000b4" />
    <text x="689" y="978" fill="#0f0" fontSize="15" textAnchor="middle">Y</text>
    <text x="720" y="1015" fill="#f00" fontSize="16">X</text>
  </svg>
);

/* ---------- beam table ---------- */

const LinkRow = styled.div`
  display: flex;
  gap: 12px;
  padding: 7px 5px 4px;
`;

const LinkButton = styled.button`
  color: ${(p) => (p.disabled ? "#aaa" : "#222")};
`;

const TableClip = styled.div`
  flex: 1;
  overflow: hidden;
`;

const BeamTable = styled.table`
  width: 1603px;
  table-layout: fixed;
  border-collapse: collapse;
  th {
    height: 17px;
    padding: 1px 0 0;
    border: 1px solid #d9d9d9;
    font-weight: 400;
    line-height: 15px;
    white-space: nowrap;
    overflow: hidden;
  }
  th:first-child { border-left: 0; }
`;

const HScroll = styled.i`
  width: 58%;
  height: 4px;
  margin: 0 0 3px 12px;
  border-radius: 2px;
  background: #e6e6e6;
`;

const beamCols = [61, 61, 61, 61, 61, 41, 41, 41, 41, 100, 81, 81, 81, 81, 81, 81, 81, 101, 81, 102, 41, 61, 78];
const beamSub = ["起点标高", "终点标高", "A1", "A2", "A3", "A4", "跨长", "截面(B*H)", "距左边线距离", "左支座钢筋", "跨中钢筋", "右支座钢筋", "下通长筋", "下部钢筋", "侧面通长筋", "侧面原位标注筋", "拉筋"];

const BeamPanel = () => (
  <Panel $flex="297 1 0">
    <PanelHead><Grip /><PanelTitle $pad={3}>梁平法表格</PanelTitle><Close /></PanelHead>
    <LinkRow>
      <LinkButton disabled>复制跨数据</LinkButton>
      <LinkButton disabled>粘贴跨数据</LinkButton>
      <LinkButton disabled>输入当前列数据</LinkButton>
      <LinkButton disabled>删除当前列数据</LinkButton>
      <LinkButton>页面设置</LinkButton>
      <LinkButton disabled>调换起始跨</LinkButton>
      <LinkButton>悬臂钢筋代号</LinkButton>
    </LinkRow>
    <TableClip>
      <BeamTable>
        <colgroup>{beamCols.map((w, i) => <col key={i} width={w} />)}</colgroup>
        <thead>
          <tr>
            <th rowSpan="2">位置</th><th rowSpan="2">名称</th><th rowSpan="2">跨号</th>
            <th colSpan="2">标高</th><th colSpan="7">构件尺寸(mm)</th><th rowSpan="2">上通长筋</th>
            <th colSpan="3">上部钢筋</th><th colSpan="2">下部钢筋</th><th colSpan="3">侧面钢筋</th>
            <th rowSpan="2">箍筋</th><th rowSpan="2">肢数</th>
          </tr>
          <tr>{beamSub.map((t) => <th key={t}>{t}</th>)}</tr>
        </thead>
      </BeamTable>
    </TableClip>
    <HScroll />
  </Panel>
);

/* ---------- display settings ---------- */

const SetTabs = styled.div`
  display: flex;
  gap: 4px;
  padding: 3px 3px 0;
  border-bottom: 1px solid #c8c8c8;
`;

const SetTab = styled.button`
  width: 60px;
  height: 22px;
  border: 1px solid ${(p) => (p.$on ? "#c8c8c8" : "#dcdcdc")};
  border-bottom: 0;
  border-radius: 3px 3px 0 0;
  color: ${(p) => (p.$on ? BLUE : "#555")};
  background: ${(p) => (p.$on ? "#fff" : "#dcdcdc")};
`;

const Filters = styled.div`
  display: grid;
  grid-template-columns: 1fr 1fr 1fr;
  padding: 3px 3px 7px 9px;
  label { display: flex; align-items: center; gap: 3px; }
`;

const SetBody = styled.div`
  display: flex;
  gap: 4px;
  margin: 0 3px;
  border-top: 1px solid #d5d5d5;
`;

const SetTable = styled.table`
  width: 326px;
  table-layout: fixed;
  border-collapse: collapse;
  margin-top: -1px;
  th, td {
    height: 21px;
    padding: 0;
    border: 1px solid #d9d9d9;
    font-weight: 400;
    text-align: center;
    line-height: 14px;
  }
  th:nth-child(2), th:nth-child(3) { width: 63px; }
`;

const TreeCell = styled.div`
  display: flex;
  align-items: center;
  height: 20px;
  padding-top: 1px;
  padding-left: ${(p) => [2, 12, 8][p.$level]}px;
  gap: 6px;
  ${(p) => p.$level === 2 && css`
    &::before {
      content: "";
      width: 16px;
      height: 100%;
      margin: 0 0 0 10px;
      background: linear-gradient(#dcdcdc, #dcdcdc) 0 0 / 1px ${p.$last ? "10px" : "100%"} no-repeat,
        linear-gradient(#dcdcdc, #dcdcdc) 0 10px / 100% 1px no-repeat;
    }
  `}
`;

const Minus = styled.button`
  width: 12px;
  height: 13px;
  border: 1px solid #8a8a8a;
  border-radius: 2px;
  line-height: 9px;
`;

const ResetButton = styled.button`
  align-self: flex-end;
  height: 26px;
  margin: 6px 9px 6px;
  padding: 0 8px;
  border: 1px solid #bdbdbd;
  border-radius: 3px;
`;

// level|name|state of 显示图元: 1 ticked, 0 empty, p partly
const displayRows = [
  "0|所有构件|p", "1|施工段|p", "2|土方工程|0", "2|基础工程|0", "2|主体结构|1", "2|二次结构|0", "2|装饰装修|0", "2|外墙工程|0", "2|其它土建|0", "2|钢筋工程|1",
  "1|轴线|1|d", "2|轴网|1|d", "2|辅助轴线|1|d",
  "1|柱|p", "2|柱|1", "2|构造柱|1", "2|砌体柱|0", "2|约束边缘非阴影区|1",
  "1|墙|p", "2|剪力墙|1", "2|人防门框墙|1", "2|砌体墙|1", "2|砌体加筋|0", "2|保温墙|0", "2|暗梁|0", "2|墙垛|0", "2|幕墙|1",
  "1|门窗洞|0", "2|门|0", "2|窗|0", "2|门联窗|0", "2|墙洞|0", "2|带形窗|0", "2|带形洞|0", "2|飘窗|0", "2|老虎窗|0", "2|过梁|0", "2|壁龛|0",
  "1|梁|1", "2|梁|1", "2|连梁|1", "2|圈梁|1",
  "1|板|p", "2|现浇板|1", "2|螺旋板|0", "2|坡道|1", "2|柱帽|0", "2|板洞|1", "2|板受力筋|0",
].map((r) => r.split("|"));

const DisplayPanel = () => (
  <Panel>
    <PanelHead><Grip /><PanelTitle $pad={3}>显示设置</PanelTitle><Close /></PanelHead>
    <SetTabs><SetTab $on>图元显示</SetTab><SetTab>楼层显示</SetTab></SetTabs>
    <Filters>
      {["普通图元", "拆除图元", "加固图元"].map((t) => <label key={t}><Check defaultChecked />{t}</label>)}
    </Filters>
    <SetBody>
      <SetTable>
        <thead><tr><th>图层构件</th><th>显示图元</th><th>显示名称</th></tr></thead>
        <tbody>
          {displayRows.map(([level, name, state, dis], i) => (
            <tr key={i}>
              <td>
                <TreeCell $level={Number(level)} $last={displayRows[i + 1] && displayRows[i + 1][0] === "1"}>
                  {level !== "2" && <Minus aria-label={`收起${name}`}>-</Minus>}
                  {name}
                </TreeCell>
              </td>
              <td><Check aria-label={`${name} 显示图元`} defaultChecked={state === "1"} $partial={state === "p"} /></td>
              <td><Check aria-label={`${name} 显示名称`} disabled={!!dis} /></td>
            </tr>
          ))}
        </tbody>
      </SetTable>
      <ScrollThumb $h={307} $top={12} />
    </SetBody>
    <ResetButton>恢复默认设置</ResetButton>
  </Panel>
);

/* ---------- status bar and task bar ---------- */

const StatusBar = styled.footer`
  display: flex;
  align-items: center;
  height: 31px;
  padding-left: 2px;
  border-bottom: 1px solid #aab0ba;
  background: #fcfcfc;
`;

const StatusText = styled.span`
  width: ${(p) => p.$w}px;
  white-space: pre;
`;

const SnapButton = styled.button`
  display: flex;
  align-items: center;
  justify-content: center;
  gap: 6px;
  width: ${(p) => (p.$wide ? 36 : 25)}px;
  height: 25px;
  margin-right: ${(p) => p.$gap || 3}px;
  border: 1px solid ${(p) => (p.$on ? BLUE : "#8b8b8b")};
  border-radius: 3px;
  background: ${(p) => (p.$on ? "#d9e8fb" : "#fff")};
`;

const Hint = styled.span`
  display: flex;
  align-items: center;
  gap: 3px;
  margin-left: 14px;
`;

const TaskBar = styled.footer`
  display: grid;
  grid-template-columns: 914px 1fr auto;
  align-items: center;
  height: 48px;
  background: linear-gradient(90deg, #d3e0ea, #cfe0e8 12%, #dde8f3 24%, #d3dfeb 38%, #dde6f4 55%, #e2e9f5 70%, #d2dfea 86%, #dfe8f5);
`;

const Weather = styled.div`
  display: flex;
  align-items: center;
  gap: 6px;
  padding-left: 18px;
  line-height: 15px;
  span { color: #555; }
`;

const Apps = styled.div`
  display: flex;
  align-items: center;
`;

const AppButton = styled.button`
  display: flex;
  align-items: center;
  justify-content: center;
  position: relative;
  width: 38px;
  height: 38px;
  margin-left: 6px;
  border-radius: 4px;
  background: ${(p) => (p.$on ? "rgba(255,255,255,.65)" : "none")};
  &::after {
    content: "";
    display: ${(p) => (p.$run || p.$on ? "block" : "none")};
    position: absolute;
    bottom: 0;
    width: ${(p) => (p.$on ? 16 : 6)}px;
    height: 3px;
    border-radius: 2px;
    background: ${(p) => (p.$on ? "#0a6cd6" : "#8a929c")};
  }
`;

const TaskSearch = styled.label`
  display: flex;
  align-items: center;
  width: 217px;
  height: 31px;
  margin: 0 0 0 14px;
  padding: 0 4px 0 11px;
  gap: 9px;
  border: 1px solid #d5dce4;
  border-radius: 16px;
  background: #f6f9fc;
  font-size: 14px;
  input {
    flex: 1;
    min-width: 0;
    border: 0;
    padding: 0;
    outline: 0;
    background: none;
  }
  input::placeholder { color: #555; }
`;

const Tray = styled.div`
  display: flex;
  align-items: center;
  gap: 16px;
  padding-right: 18px;
`;

const Ime = styled.span`
  font-size: 16px;
`;

const SysIcons = styled.div`
  display: flex;
  align-items: center;
  gap: 8px;
`;

const Clock = styled.div`
  text-align: right;
`;

const wechat = <g><ellipse cx="9" cy="9" rx="8" ry="7" fill="#1fc15f" /><circle cx="6" cy="7" r="1" fill="#fff" /><circle cx="11" cy="7" r="1" fill="#fff" /><ellipse cx="17" cy="16" rx="6" ry="5" fill="#eef0f2" /><circle cx="15" cy="15" r="1" fill="#555" /><circle cx="19" cy="15" r="1" fill="#555" /></g>;

const apps = [
  ["任务视图", <g><rect x="1" y="7" width="16" height="16" fill="#222" /><rect x="7" y="1" width="16" height="16" fill="#f4f4f4" /><rect x="7" y="7" width="10" height="10" fill="#bbb" /></g>],
  ["资源管理器", <g><path d="M0 2h9l2 3h13v17H0z" fill="#f3b51c" /><path d="M0 8h24v15H0z" fill="#ffd95a" /><path d="M5 23v-5l3-2h8l3 2v5z" fill="#1b7fd4" /></g>, "run"],
  ["Edge", <g><circle cx="12" cy="12" r="11" fill="#1479c9" /><path d="M1 12C1 0 23-2 23 10c0 5-6 6-8 4 2-5-3-8-7-6-3 1-6 4-7 4z" fill="#43cf8c" /><path d="M8 8c-5 5-1 15 8 13 3 0 5-2 6-4-4 2-9 1-9-4 0-2 1-2 1-3-1-3-4-3-6-2z" fill="#0c4f94" /><path d="M12 10c3 0 3 2 2 4-2-1-3-2-2-4z" fill="#e7f2fa" /></g>],
  ["日历", <g><rect x="1" y="3" width="22" height="20" rx="2" fill="#1e9be8" /><path d="M1 7h22V3H1z" fill="#0b62b0" /><path d="M6 1v4M18 1v4" stroke="#39b6f5" strokeWidth="2" /><path d="M8 11h10M5 15h13M5 19h9" stroke="#fff" strokeWidth="2" strokeDasharray="2 2" /></g>],
  ["Chrome", <g><circle cx="12" cy="12" r="11" fill="#e33b2e" /><path d="M12 12L2 7a11 11 0 009 16z" fill="#2ba24c" /><path d="M12 12l-1 11a11 11 0 0011-16H12z" fill="#fbc116" /><circle cx="12" cy="12" r="6" fill="#fff" /><circle cx="12" cy="12" r="4" fill="#3b7ded" /></g>, "run"],
  ["微信", wechat, "run"],
  ["WPS", <path d="M1 4h5v3h2l1 9 4-9h3l1 9 3-9h-4V4h7l-4 17h-5l-2-7-3 7H5z" fill="#f03a2b" />],
  ["猫", <path d="M7 21c-1-7 3-8 3-13V3l2 3h4l2-3v7c2 4 2 8 2 11zM7 21c-4 0-4-3-3-5" fill="#1d2c50" stroke="#1d2c50" />],
  ["广联达", <g><rect width="24" height="24" rx="5" fill="#1677f5" /><path d="M14 24l10-12v7a5 5 0 01-5 5z" fill="#9a4dff" /><path d="M5 8l6-4h8c0 3-2 5-4 5v8l-4 4V9z" fill="#fff" /></g>, "on"],
  ["CAD", <g><rect y="1" width="24" height="22" rx="2" fill="#4a6f9c" /><rect x="2" y="3" width="20" height="18" fill="#1262bb" /><text x="12" y="16" fontSize="9" fill="#dce9f8" textAnchor="middle">CAD</text></g>, "run"],
  ["计算器", <g><rect x="3" width="19" height="24" rx="2" fill="#6a7787" /><rect x="5" y="2" width="15" height="5" fill="#29c3f0" /><path d="M5 10h10M5 14h10M5 18h10" stroke="#e8ecf0" strokeWidth="3" strokeDasharray="3 1" /><path d="M16 13h4v9h-4z" fill="#0f4a8c" /></g>, "run"],
];

const quick = ["upload", "newFile", "open", "save", "undo", "redo", "sigma", "calcFind", "gridFind", "partFind", "pen", "ladder", "pageFind"];

const App = () => (
  <Page>
    <GlobalStyle />
    <TitleBar>
      <QuickBar>
        <QuickButton $w={40} aria-label="菜单">
          <Svg width="24" height="24" viewBox="0 0 24 24">
            <path d="M1 9l7-4h10c0 4-3 6-6 6v8l-5 4V10z" fill="#1677f5" /><path d="M9 17l4-4v7l-4 3z" fill="#8a4dff" /><path d="M18 21l3-3v3z" fill="#555" />
          </Svg>
        </QuickButton>
        {quick.map((n) => (
          <QuickButton key={n} aria-label={n}>
            <Icon name={n} size={18} />
            {n === "upload" && <RedDot />}
            {(n === "undo" || n === "redo") && <Caret />}
          </QuickButton>
        ))}
        <Caret />
      </QuickBar>
      <TitleText>广联达BIM土建计量一体化平台 GTJ2026 - [C:\Users\GabrieloOo\Documents\WPSDrive\1388443584\WPS云盘\工作文件\32、成都市公安局执法办案管理中心及监管场所功能完善项目\2、计算底稿\成都市公安局执法办案管理中心及监管场所功能完善项目.GTJ]</TitleText>
      <WinButtons>
        <button aria-label="最小化">–</button><button aria-label="还原">❐</button><button aria-label="关闭">✕</button>
      </WinButtons>
    </TitleBar>

    <TabRow>
      {ribbonTabs.map((t) => <RibbonTab key={t} href="#" $on={t === "建模"}>{t}</RibbonTab>)}
      <HelpSearch>
        <input aria-label="帮助搜索" defaultValue="楼层三维显示图元/轴网有错位，位置不对应如何处理?" />
        <Icon name="search" size={11} color="#999" />
      </HelpSearch>
      <Account>
        <Svg width="16" height="16" viewBox="0 0 16 16"><rect width="16" height="16" fill="#b5d5f7" /><circle cx="8" cy="6" r="4" fill="#fff" /><path d="M3 16c0-6 10-6 10 0z" fill="#fff" /></Svg>
        GabrieloOo
      </Account>
      <HelpIcons>
        <Svg width="16" height="16" viewBox="0 0 16 16" fill="none" stroke={DARK}><path d="M3 12V7C3 0 13 0 13 7v5l-4 3M3 8H1v4h2M13 8h2v4h-2" /></Svg>
        <Svg width="16" height="16" viewBox="0 0 16 16"><rect y="1" width="16" height="14" rx="2" fill="#df1f1f" /><path d="M1 5h14" stroke="#fff" /><path d="M4 10h9" stroke="#fff" strokeWidth="2" strokeDasharray="2 1" /></Svg>
        <Tool>?<Caret /></Tool>
        <Svg width="14" height="14" viewBox="0 0 14 14" fill="none" stroke={DARK}><path d="M4 1L1 4l2 3 1-1v7h6V6l1 1 2-3-3-3c-1 2-5 2-6 0z" /></Svg>
        <Svg width="14" height="10" viewBox="0 0 14 10" fill="none" stroke="#333" strokeWidth="1.400"><path d="M1 8l6-6 6 6" /></Svg>
      </HelpIcons>
    </TabRow>

    <Ribbon>
      {ribbonGroups.map((g) => (
        <Group key={g.label} $w={g.w} $marked={g.marked}>
          <GroupBody $pad={g.pad}>
            {g.big && g.big.map(([icon, text, w, on, drop]) => <Big key={text} icon={icon} text={text} w={w} on={on} drop={drop} />)}
            {g.cols && g.cols.map(([w, items], i) => <Tools key={i} w={w} items={items} />)}
          </GroupBody>
          <GroupLabel $drop={g.drop}>{g.label}{g.drop && <Caret />}</GroupLabel>
        </Group>
      ))}
    </Ribbon>

    <SelectBar>
      {["执法办案中心", "第4层", "梁", "梁", "QTQ-2", "分层1"].map((t, i) => (
        <SelectBox key={i}>
          <select aria-label={`选择${i + 1}`} defaultValue={t}><option>{t}</option></select>
          <Caret />
        </SelectBox>
      ))}
    </SelectBar>

    <Main>
      <NavPanel />
      <Stack>
        <Panel $flex="877 1 0">
          <PanelHead><Grip /><DockTab $on>构件列表</DockTab><DockTab>图纸管理</DockTab><Close /></PanelHead>
          <ToolRow>
            <Joined>
              <IconButton aria-label="新建"><Icon name="newFile" /></IconButton>
              <IconButton $w={12} aria-label="更多"><Caret /></IconButton>
            </Joined>
            {["copy", "trash", "layers", "tableSave", "tableEdit", "lines", "redList"].map((n) => (
              <IconButton key={n} aria-label={n}><Icon name={n} /></IconButton>
            ))}
          </ToolRow>
          <SearchField>
            <input aria-label="搜索构件" placeholder="搜索构件..." />
            <Icon name="search" size={11} color="#888" />
          </SearchField>
          <Tree>
            <TreeRow><Caret />楼层框架梁</TreeRow>
            <TreeRow $child><TreeName>QTQ-1 &nbsp;&lt;7&gt;</TreeName></TreeRow>
            <TreeRow $child><TreeName $on>QTQ-2 &nbsp;&lt;30&gt;</TreeName></TreeRow>
          </Tree>
        </Panel>
        <Panel $flex="291 1 0">
          <PanelHead><Grip /><DockTab>属性列表</DockTab><DockTab $on>图层管理</DockTab><Close /></PanelHead>
          <ToolRow $pad="6px 6px 7px">
            <IconButton aria-label="显示图层"><Icon name="eye" /></IconButton>
            <IconButton aria-label="隐藏图层"><Icon name="eyeOff" /></IconButton>
          </ToolRow>
          <LayerTable>
            <thead><tr><th>开 / 关</th><th>颜色</th><th>名称</th></tr></thead>
            <tbody>
              {["已提取的 CAD 图层", "CAD 原始图层"].map((t) => (
                <tr key={t}><td><Check defaultChecked aria-label={t} /></td><td><Side /></td><td>{t}</td></tr>
              ))}
            </tbody>
          </LayerTable>
        </Panel>
      </Stack>
      <Stack>
        <CanvasBox>
          <PlanDrawing />
          <ViewTools>
            <button aria-label="动态观察"><Icon name="orbit" size={21} /></button>
            <button aria-label="三维"><Icon name="cube3d" size={20} /></button>
            <button aria-label="视角"><Icon name="cube" size={20} /></button>
            <Caret />
            <button aria-label="实体"><Icon name="cubeFill" size={20} /></button>
            <Caret />
            <button aria-label="全屏"><Icon name="frame" size={20} /></button>
            <button aria-label="局部三维"><Icon name="cubeBox" size={20} /></button>
            <hr />
            <button aria-label="显示设置"><Icon name="listEye" size={20} /></button>
          </ViewTools>
          <Handle $side="left" aria-label="收起左侧"><svg width="6" height="10" fill="none" stroke="#aaa"><path d="M5 1L1 5l4 4" /></svg></Handle>
          <Handle $side="right" aria-label="收起右侧"><svg width="6" height="10" fill="none" stroke="#aaa"><path d="M1 1l4 4-4 4" /></svg></Handle>
          <Handle $side="bottom" aria-label="收起下方"><svg width="10" height="6" fill="none" stroke="#aaa"><path d="M1 1l4 4 4-4" /></svg></Handle>
        </CanvasBox>
        <BeamPanel />
      </Stack>
      <DisplayPanel />
    </Main>

    <StatusBar>
      <StatusText $w={90}>{"层高：  4.5"}</StatusText>
      <StatusText $w={139}>{"标高：  13.75~18.25"}</StatusText>
      <StatusText $w={111}>选中图元：0</StatusText>
      <StatusText $w={110}>隐藏图元：0</StatusText>
      <SnapButton aria-label="正交"><Icon name="corner" /></SnapButton>
      <SnapButton $wide $on $gap={6} aria-label="矩形"><Icon name="snapRect" /><Caret /></SnapButton>
      <SnapButton $gap={6} aria-label="交点"><Icon name="cross" off /></SnapButton>
      <SnapButton $wide aria-label="角度"><Icon name="angle" /><Caret /></SnapButton>
      <SnapButton $wide aria-label="偏移"><Icon name="plusBox" /><Caret /></SnapButton>
      <SnapButton $on aria-label="窗选"><Icon name="window" /></SnapButton>
      <SnapButton aria-label="曲线"><Icon name="curve" /></SnapButton>
      <Hint><Icon name="diag" />按鼠标左键指定第一个角点，或拾取构件图元</Hint>
    </StatusBar>

    <TaskBar>
      <Weather>
        <Svg width="26" height="28" viewBox="0 0 26 28">
          <circle cx="12" cy="15" r="9" fill="#f58a1e" /><ellipse cx="7" cy="11" rx="7" ry="4" fill="#9fc3f5" /><ellipse cx="18" cy="21" rx="7" ry="4" fill="#8db8f2" />
          <circle cx="19" cy="8" r="8" fill="#c42b1c" /><text x="19" y="12" fontSize="11" fill="#fff" textAnchor="middle">6</text>
        </Svg>
        <div>28°C<br /><span>局部晴朗</span></div>
      </Weather>
      <Apps>
        <button aria-label="开始">
          <Svg width="24" height="24" viewBox="0 0 24 24"><path d="M0 0h11v11H0zM13 0h11v11H13zM0 13h11v11H0zM13 13h11v11H13z" fill="#0f86dc" /></Svg>
        </button>
        <TaskSearch>
          <Icon name="search" size={15} color="#222" />
          <input aria-label="搜索" placeholder="搜索" />
          <Svg width="46" height="26" viewBox="0 0 46 26">
            <ellipse cx="22" cy="23" rx="21" ry="3" fill="#48c3d8" />
            <path d="M6 20C4 12 8 5 15 4l3-3 2 4c4 1 6 4 6 7-5-3-11-2-13 1-2 2-5 3-7 7z" fill="#6f8fc4" />
            <path d="M13 17c7-2 12 1 17 0 7-1 9-5 8-9l-4-5 5 2 4-2 1 6c0 8-4 14-13 15-10 1-17-1-18-7z" fill="#3a4f86" />
            <path d="M15 20c5 3 12 4 18 2" stroke="#b9c9e6" fill="none" />
          </Svg>
        </TaskSearch>
        {apps.map(([name, art, state]) => (
          <AppButton key={name} aria-label={name} $on={state === "on"} $run={state === "run"}>
            <Svg width="24" height="24" viewBox="0 0 24 24">{art}</Svg>
          </AppButton>
        ))}
      </Apps>
      <Tray>
        <Svg width="12" height="8" viewBox="0 0 12 8" fill="none" stroke="#222" strokeWidth="1.400"><path d="M1 7l5-5 5 5" /></Svg>
        <Svg width="16" height="16" viewBox="0 0 24 24"><path d="M1 4h5l4 13 2-9-2-4h13l-6 18-4-9-4 9z" fill="#f03a2b" /><circle cx="18" cy="18" r="6" fill="#1d8ff0" /></Svg>
        <Svg width="16" height="16" viewBox="0 0 16 16"><rect width="16" height="16" rx="3" fill="#0a7cf0" /><path d="M5 3l6 5-2 5-1-3z" fill="#fff" /></Svg>
        <Svg width="16" height="18" viewBox="0 0 16 18"><ellipse cx="8" cy="9" rx="6" ry="9" fill="#1a1a1a" /><ellipse cx="8" cy="13" rx="4" ry="4" fill="#fff" /><path d="M3 9h10v2H3z" fill="#e33" /><circle cx="13" cy="14" r="4" fill="#f79a3a" /></Svg>
        <Svg width="16" height="16" viewBox="0 0 24 24">{wechat}</Svg>
        <Ime>英</Ime>
        <SysIcons>
          <Svg width="16" height="14" viewBox="0 0 16 14" fill="none" stroke="#222" strokeWidth="1.300"><path d="M1 5c4-5 10-5 14 0M3 8c3-4 7-4 10 0M6 10c1-2 3-2 4 0M8 12v1" /></Svg>
          <Svg width="16" height="14" viewBox="0 0 16 14" fill="none" stroke="#222"><path d="M1 5h2l4-4v12L3 9H1zM10 5l5 5M15 5l-5 5" /></Svg>
          <Svg width="18" height="14" viewBox="0 0 18 14"><path d="M2 4h13v9H2zM15 6h2v4h-2zM1 0h5v5H1z" fill="#222" /></Svg>
        </SysIcons>
        <Clock>10:49<br />2025-07-23</Clock>
      </Tray>
    </TaskBar>
  </Page>
);

export default App;
